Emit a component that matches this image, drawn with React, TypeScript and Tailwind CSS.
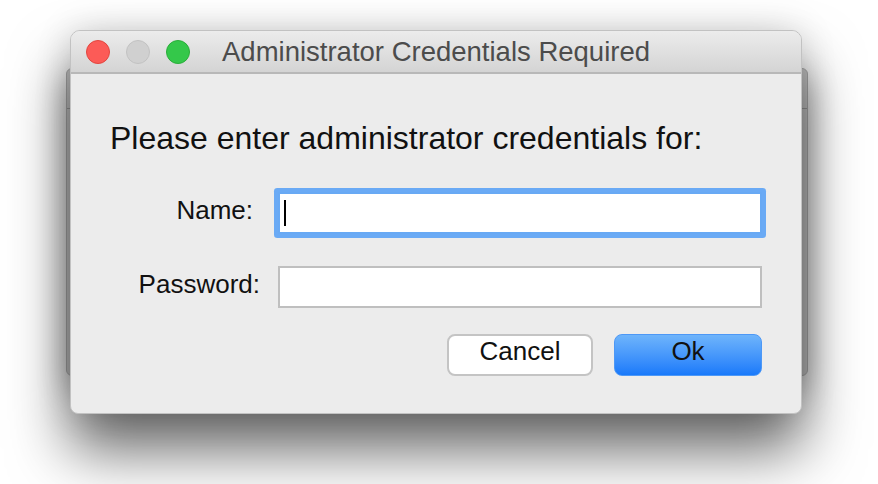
import React from "react";

export default function App() {
  const font = { fontFamily: '"Liberation Sans", Arial, Helvetica, sans-serif' };
  return (
    <div className="relative w-[878px] h-[484px] overflow-hidden bg-white" style={font}>
      {/* window behind the sheet */}
      <div className="absolute left-[66px] top-[68px] w-[742px] h-[308px] rounded-[6px] border border-[#a9a9a9] bg-[#c4c4c4] shadow-[0_10px_30px_rgba(0,0,0,0.25)]">
        <div className="h-[40px] border-b border-[#9a9a9a]" />
      </div>

      {/* main dialog window */}
      <div className="relative ml-[70px] mt-[30px] w-[732px] h-[384px] rounded-t-[10px] rounded-b-[8px] border border-[#c2c2c2] bg-[#ececec] shadow-[0_36px_60px_rgba(0,0,0,0.6),0_0_36px_rgba(0,0,0,0.14)] flex flex-col overflow-hidden">
        {/* title bar */}
        <div className="relative h-[43px] shrink-0 bg-gradient-to-b from-[#ececec] to-[#d4d4d4] border-b-2 border-[#b8b8b8] flex items-center justify-center">
          <div className="absolute left-[15px] top-[9px] flex gap-[16px]">
            <div className="w-[24px] h-[24px] rounded-full bg-[#fc5b57] border border-[#e2463f]" />
            <div className="w-[24px] h-[24px] rounded-full bg-[#d0d0d0] border border-[#c2c2c2]" />
            <div className="w-[24px] h-[24px] rounded-full bg-[#34c84a] border border-[#2aad3a]" />
          </div>
          <span className="text-[27.5px] leading-none text-[#4c4c4c]">Administrator Credentials Required</span>
        </div>

        {/* body */}
        <div className="flex flex-col pr-[39px]">
          <div className="pl-[39px] mt-[46px] text-[32px] leading-[36px] text-[#111]">
            Please enter administrator credentials for:
          </div>

          <div className="flex items-center mt-[36px]">
            <div className="w-[207px] pr-[25px] pb-[6px] text-right text-[26px] leading-none text-[#111]">Name:</div>
            <div className="flex-1 h-[42px] bg-white border-2 border-[#68a9f4] shadow-[0_0_0_4px_#6aaaf5] rounded-[1px] flex items-center">
              <div className="ml-[4px] w-[2px] h-[26px] bg-black" />
            </div>
          </div>

          <div className="flex items-center mt-[32px]">
            <div className="w-[207px] pr-[18px] pb-[6px] text-right text-[26px] leading-none text-[#111]">Password:</div>
            <div className="flex-1 h-[42px] bg-white border-2 border-[#bfbfbf]" />
          </div>

          <div className="flex justify-end gap-[21px] mt-[26px]">
            <div className="w-[146px] h-[42px] rounded-[8px] bg-white border-2 border-[#c4c4c4] flex items-center justify-center pb-[9px] text-[26px] leading-none text-[#111]">
              Cancel
            </div>
            <div className="w-[148px] h-[42px] rounded-[8px] bg-gradient-to-b from-[#6eb4fb] to-[#1879fa] border border-[#4d98f6] flex items-center justify-center pb-[9px] text-[26px] leading-none text-[#111]">
              Ok
            </div>
          </div>
        </div>
      </div>
    </div>
  );
}
